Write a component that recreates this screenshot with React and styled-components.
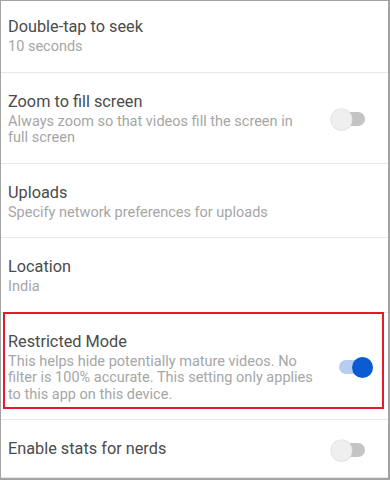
import styled, { createGlobalStyle } from "styled-components";

const GlobalStyle = createGlobalStyle`
  html, body {
    margin: 0;
    padding: 0;
    background: #ffffff;
  }
  body {
    font-family: Roboto, "Noto Sans", "Liberation Sans", sans-serif;
  }
`;

const settings = [
  { title: "Double-tap to seek", sub: "10 seconds" },
  {
    title: "Zoom to fill screen",
    sub: "Always zoom so that videos fill the screen in full screen",
    toggle: false,
  },
  { title: "Uploads", sub: "Specify network preferences for uploads" },
  { title: "Location", sub: "India" },
  {
    title: "Restricted Mode",
    sub: "This helps hide potentially mature videos. No filter is 100% accurate. This setting only applies to this app on this device.",
    toggle: true,
    marked: true,
  },
  { title: "Enable stats for nerds", toggle: false },
];

function App() {
  return (
    <>
      <GlobalStyle />
      <Frame>
        <List>
          {settings.map((item) => (
            <Row key={item.title}>
              <TextBlock>
                <Title>{item.title}</Title>
                {item.sub && <Sub>{item.sub}</Sub>}
              </TextBlock>
              {item.toggle !== undefined && (
                <Switch $on={item.toggle}>
                  <Thumb $on={item.toggle} />
                </Switch>
              )}
              {item.marked && <Marker />}
            </Row>
          ))}
        </List>
      </Frame>
    </>
  );
}

export default App;

const Frame = styled.div`
  width: 390px;
  height: 480px;
  box-sizing: border-box;
  border: 1px solid #a3a3a3;
  border-right-width: 2px;
  border-bottom-width: 2px;
  overflow: hidden;
  background: #ffffff;
`;

// list is scrolled a few px, so the first row is cut at the top
const List = styled.div`
  margin-top: -3px;
  display: flex;
  flex-direction: column;
`;

const Row = styled.div`
  position: relative;
  display: flex;
  align-items: center;
  padding: 19px 15px 16px 7px;
  border-bottom: 1px solid #e8e8e8;
`;

const TextBlock = styled.div`
  flex: 1;
  min-width: 0;
  padding-right: 17px;
`;

const Title = styled.div`
  font-size: 16.3px;
  line-height: 20px;
  color: #4b4b4b;
  margin-bottom: 2px;
`;

const Sub = styled.div`
  font-size: 14.5px;
  line-height: 16.5px;
  color: #a6a6a6;
`;

const Switch = styled.div`
  position: relative;
  flex: none;
  width: 42px;
  height: 22px;
  display: flex;
  align-items: center;
  justify-content: ${(p) => (p.$on ? "flex-end" : "flex-start")};

  &::before {
    content: "";
    position: absolute;
    top: 4px;
    left: ${(p) => (p.$on ? "8px" : "0")};
    width: 34px;
    height: 14px;
    border-radius: 7px;
    background: ${(p) => (p.$on ? "#b6cdf0" : "#c4c4c4")};
  }
`;

const Thumb = styled.div`
  position: relative;
  width: 21px;
  height: 21px;
  border-radius: 50%;
  background: ${(p) => (p.$on ? "#0b5bd3" : "#efefef")};
  box-shadow: ${(p) =>
    p.$on ? "none" : "0 0 0 0.5px #dcdcdc, 0 1px 1px rgba(0,0,0,0.08)"};
`;

// red annotation box drawn over the highlighted row
const Marker = styled.div`
  position: absolute;
  top: -1px;
  left: 2px;
  right: 4px;
  bottom: 10px;
  border: 2px solid #e8192c;
  pointer-events: none;
`;
